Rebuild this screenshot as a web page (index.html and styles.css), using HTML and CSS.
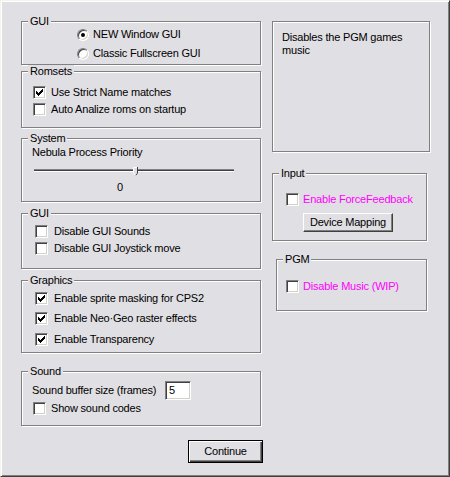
FILE: index.html
```html
<!DOCTYPE html>
<html>
<head>
<meta charset="utf-8">
<link rel="stylesheet" href="styles.css">
</head>
<body>
<div class="win">
  <div class="cols">
    <div class="left">
      <div class="group g-gui">
        <div class="legend">GUI</div>
        <div class="rows rows-gui">
          <div class="row"><span class="radio on"></span><span class="txt">NEW Window GUI</span></div>
          <div class="row"><span class="radio"></span><span class="txt">Classic Fullscreen GUI</span></div>
        </div>
      </div>

      <div class="group g-rom">
        <div class="legend">Romsets</div>
        <div class="rows rows-rom">
          <div class="row gap5"><span class="chk on"><svg width="13" height="13" viewBox="0 0 13 13"><path d="M3 5h1v3H3zM4 6h1v3H4zM5 7h1v3H5zM6 6h1v3H6zM7 5h1v3H7zM8 4h1v3H8zM9 3h1v3H9z" fill="#000"/></svg></span><span class="txt">Use Strict Name matches</span></div>
          <div class="row gap5"><span class="chk"></span><span class="txt">Auto Analize roms on startup</span></div>
        </div>
      </div>

      <div class="group g-sys">
        <div class="legend">System</div>
        <div class="sys-body">
          <div class="txt sys-label">Nebula Process Priority</div>
          <div class="slider">
            <div class="track"></div>
            <svg class="thumb" width="5" height="9" viewBox="0 0 5 9"><path d="M0 0h5v6l-2.5 3L0 6z" fill="#E0DFE3"/><path d="M0.5 6V0.5H4" stroke="#fff" fill="none"/><path d="M4.5 0v6.2L2.5 8.6" stroke="#404040" fill="none"/><path d="M0.5 6.2l2 2.4" stroke="#fff" fill="none"/></svg>
          </div>
          <div class="txt sys-val">0</div>
        </div>
      </div>

      <div class="group g-gui2">
        <div class="legend">GUI</div>
        <div class="rows rows-gui2">
          <div class="row gap6"><span class="chk"></span><span class="txt">Disable GUI Sounds</span></div>
          <div class="row gap6"><span class="chk"></span><span class="txt">Disable GUI Joystick move</span></div>
        </div>
      </div>

      <div class="group g-gfx">
        <div class="legend">Graphics</div>
        <div class="rows rows-gfx">
          <div class="row gap6"><span class="chk on"><svg width="13" height="13" viewBox="0 0 13 13"><path d="M3 5h1v3H3zM4 6h1v3H4zM5 7h1v3H5zM6 6h1v3H6zM7 5h1v3H7zM8 4h1v3H8zM9 3h1v3H9z" fill="#000"/></svg></span><span class="txt">Enable sprite masking for CPS2</span></div>
          <div class="row gap6"><span class="chk on"><svg width="13" height="13" viewBox="0 0 13 13"><path d="M3 5h1v3H3zM4 6h1v3H4zM5 7h1v3H5zM6 6h1v3H6zM7 5h1v3H7zM8 4h1v3H8zM9 3h1v3H9z" fill="#000"/></svg></span><span class="txt">Enable Neo·Geo raster effects</span></div>
          <div class="row gap6 extra1"><span class="chk on"><svg width="13" height="13" viewBox="0 0 13 13"><path d="M3 5h1v3H3zM4 6h1v3H4zM5 7h1v3H5zM6 6h1v3H6zM7 5h1v3H7zM8 4h1v3H8zM9 3h1v3H9z" fill="#000"/></svg></span><span class="txt">Enable Transparency</span></div>
        </div>
      </div>

      <div class="group g-snd">
        <div class="legend">Sound</div>
        <div class="snd-body">
          <div class="snd-row"><span class="txt snd-label">Sound buffer size (frames)</span><span class="edit">5</span></div>
          <div class="row gap5 snd-chk"><span class="chk"></span><span class="txt">Show sound codes</span></div>
        </div>
      </div>
    </div>

    <div class="right">
      <div class="desc">Disables the PGM games music</div>

      <div class="group g-input">
        <div class="legend">Input</div>
        <div class="input-body">
          <div class="row gap4"><span class="chk"></span><span class="txt mag">Enable ForceFeedback</span></div>
          <div class="btn dev">Device Mapping</div>
        </div>
      </div>

      <div class="group g-pgm">
        <div class="legend">PGM</div>
        <div class="pgm-body">
          <div class="row gap4"><span class="chk"></span><span class="txt mag">Disable Music (WIP)</span></div>
        </div>
      </div>
    </div>
  </div>
  <div class="footer"><div class="btn btn-default">Continue</div></div>
</div>
</body>
</html>
```

FILE: styles.css
```css
html, body {
  margin: 0;
  padding: 0;
  background: #E0DFE3;
}
.win {
  width: 450px;
  height: 477px;
  box-sizing: border-box;
  background: #E0DFE3;
  border-top: 1px solid #F4F3EE;
  border-left: 1px solid #F4F3EE;
  border-right: 1px solid #404040;
  border-bottom: 1px solid #404040;
  box-shadow: inset 1px 1px #FFFFFF, inset -1px -1px #808080;
  font-family: "Liberation Sans", Arial, sans-serif;
  font-size: 11px;
  line-height: 13px;
  letter-spacing: -0.2px;
  color: #000;
}
.cols {
  display: flex;
  padding: 20px 0 0 20px;
  gap: 11px;
}
.left {
  width: 240px;
  display: flex;
  flex-direction: column;
}
.right {
  display: flex;
  flex-direction: column;
}
.group {
  box-sizing: border-box;
  border: 1px solid #808080;
  box-shadow: inset 1px 1px #FFFFFF, 1px 1px #FFFFFF;
}
.legend {
  width: fit-content;
  height: 13px;
  margin: -7px 0 0 6px;
  padding: 0 2px;
  background: #E0DFE3;
  white-space: nowrap;
}
.txt { white-space: nowrap; }
.rows {
  display: flex;
  flex-direction: column;
}
.row {
  display: flex;
  align-items: center;
  height: 13px;
}
.gap4 { gap: 4px; }
.gap5 { gap: 5px; }
.gap6 { gap: 6px; }

.radio {
  position: relative;
  width: 12px;
  height: 12px;
  box-sizing: border-box;
  border-radius: 50%;
  border: 1px solid;
  border-color: #808080 #FFFFFF #FFFFFF #808080;
  box-shadow: inset 1px 1px #404040, inset -1px -1px #D4D0C8;
  background: #fff;
  flex: none;
}
.radio.on::after {
  content: "";
  position: absolute;
  left: 3px;
  top: 3px;
  width: 4px;
  height: 4px;
  border-radius: 50%;
  background: #000;
}
.chk {
  width: 13px;
  height: 13px;
  box-sizing: border-box;
  border: 1px solid;
  border-color: #808080 #FFFFFF #FFFFFF #808080;
  box-shadow: inset 1px 1px #404040, inset -1px -1px #D4D0C8;
  background: #fff;
  flex: none;
  position: relative;
}
.chk svg {
  position: absolute;
  left: -1px;
  top: -1px;
}

/* left groups */
.g-gui { height: 44px; }
.rows-gui { padding-left: 55px; gap: 6px; }
.rows-gui .row { gap: 4px; }

.g-rom { height: 57px; margin-top: 6px; }
.rows-rom { padding: 8px 0 0 11px; gap: 4px; }

.g-sys { height: 64px; margin-top: 10px; }
.sys-body { padding: 1px 0 0 10px; }
.slider {
  position: relative;
  margin: 10px 0 0 2px;
  width: 200px;
  height: 3px;
}
.track {
  height: 1px;
  background: #404040;
  border-top: 1px solid #808080;
  border-bottom: 1px solid #FFFFFF;
}
.thumb {
  position: absolute;
  left: 99px;
  top: -2px;
}
.sys-val { margin: 9px 0 0 85px; }

.g-gui2 { height: 56px; margin-top: 11px; }
.rows-gui2 { padding: 5px 0 0 13px; gap: 4px; }

.g-gfx { height: 73px; margin-top: 11px; }
.rows-gfx { padding: 5px 0 0 13px; gap: 7px; }
.extra1 { margin-top: 1px; }

.g-snd { height: 55px; margin-top: 18px; }
.snd-body { padding: 3px 0 0 10px; }
.snd-row {
  display: flex;
  align-items: center;
  height: 19px;
}
.snd-label { width: 133px; }
.edit {
  box-sizing: border-box;
  width: 26px;
  height: 19px;
  padding: 2px 0 0 3px;
  border: 1px solid;
  border-color: #808080 #FFFFFF #FFFFFF #808080;
  box-shadow: inset 1px 1px #404040, inset -1px -1px #D4D0C8;
  background: #fff;
}
.snd-chk { margin: 2px 0 0 1px; }

/* right column */
.desc {
  box-sizing: border-box;
  width: 158px;
  height: 131px;
  padding: 9px 8px 0 9px;
  border: 1px solid #808080;
  box-shadow: inset 1px 1px #FFFFFF, 1px 1px #FFFFFF;
}
.g-input { width: 155px; height: 68px; margin-top: 21px; }
.input-body { padding: 13px 0 0 13px; }
.mag { color: #FF00FF; }
.btn {
  box-sizing: border-box;
  display: flex;
  align-items: center;
  justify-content: center;
  background: #E0DFE3;
  border: 1px solid;
  border-color: #FFFFFF #404040 #404040 #FFFFFF;
  box-shadow: inset -1px -1px #808080;
  white-space: nowrap;
}
.dev {
  width: 90px;
  height: 19px;
  margin: 7px 0 0 17px;
}
.g-pgm { width: 151px; height: 52px; margin: 18px 0 0 4px; }
.pgm-body { padding: 14px 0 0 9px; }

.footer {
  margin-top: 14px;
  padding-left: 187px;
}
.btn-default {
  width: 75px;
  height: 23px;
  border: 1px solid #000;
  box-shadow: inset 1px 1px #FFFFFF, inset -1px -1px #404040, inset -2px -2px #808080;
}
```
